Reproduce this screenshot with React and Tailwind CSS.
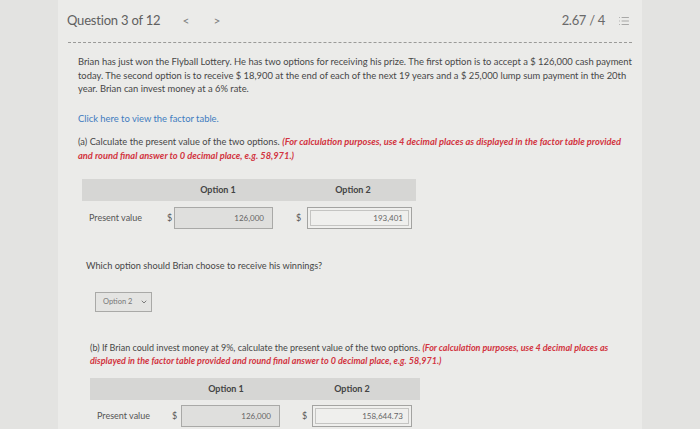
import { List, ChevronDown } from 'lucide-react'

function Row({ pad, labelW, gapA, in1W, gapB, gapC, in2W, v1, v2 }) {
  return (
    <div className="flex items-center h-[22px]" style={{ paddingLeft: pad }}>
      <span className="text-[9px] text-[#555]" style={{ width: labelW }}>Present value</span>
      <span className="text-[9px] text-[#555] w-[7px]">$</span>
      <div
        className="h-[22px] border border-[#a9a9a7] bg-[#dfdfdd] flex items-center justify-end pr-[8px] text-[8px] text-[#666]"
        style={{ width: in1W, marginLeft: gapA }}
      >
        {v1}
      </div>
      <span className="text-[9px] text-[#555] w-[7px]" style={{ marginLeft: gapB }}>$</span>
      <div
        className="h-[22px] border border-[#a3a3a1] bg-[#efefed] p-[2px]"
        style={{ width: in2W, marginLeft: gapC }}
      >
        <div className="h-full border border-[#c4c4c2] flex items-center justify-end pr-[5px] text-[8px] text-[#666]">
          {v2}
        </div>
      </div>
    </div>
  )
}

export default function App() {
  return (
    <div className="w-[700px] h-[429px] overflow-hidden bg-[#e3e3e1] font-['Lato','Liberation_Sans',sans-serif]">
      <div className="ml-[58px] w-[584px] h-full bg-[#ebebe9]">
        {/* header */}
        <div className="h-[42px] flex items-center pl-[9px] pr-[6px] w-[580px]">
          <span className="text-[13px] text-[#606060] tracking-[-0.2px]">Question 3 of 12</span>
          <span className="ml-[22px] text-[12px] text-[#808080]">&lt;</span>
          <span className="ml-[24px] text-[12px] text-[#808080]">&gt;</span>
          <span className="ml-auto text-[13px] text-[#6a6a6a] tracking-[-0.3px]">2.67 / 4</span>
          <List size={12} strokeWidth={1.2} className="ml-[13px] mr-[2px] text-[#7a7a7a]" />
        </div>
        <div className="ml-[10px] w-[564px] border-b border-dashed border-[#9a9a98]" />

        {/* problem text */}
        <p className="ml-[20px] mt-[12px] text-[9.4px] leading-[13.5px] text-[#474747]">
          Brian has just won the Flyball Lottery. He has two options for receiving his prize. The first option is to accept a $ 126,000 cash payment
          <br />
          today. The second option is to receive $ 18,900 at the end of each of the next 19 years and a $ 25,000 lump sum payment in the 20th
          <br />
          year. Brian can invest money at a 6% rate.
        </p>

        <p className="ml-[20px] mt-[16px] text-[9.4px] leading-[13.5px] text-[#3f7cc0]">Click here to view the factor table.</p>

        <p className="ml-[20px] mt-[10px] text-[9.3px] leading-[14px] text-[#474747]">
          (a) Calculate the present value of the two options.{' '}
          <span className="italic font-bold text-[#d2343f]">
            (For calculation purposes, use 4 decimal places as displayed in the factor table provided
            <br />
            and round final answer to 0 decimal place, e.g. 58,971.)
          </span>
        </p>

        {/* table a */}
        <div className="ml-[24px] mt-[16px] w-[334px]">
          <div className="h-[22px] bg-[#d6d6d4] flex items-center text-[9px] font-bold text-[#444]">
            <span className="ml-[88px] w-[96px] text-center">Option 1</span>
            <span className="ml-[34px] w-[106px] text-center">Option 2</span>
          </div>
          <div className="mt-[6px]">
            <Row pad={7} labelW={78} gapA={0} in1W={99} gapB={23} gapC={4} in2W={105} v1="126,000" v2="193,401" />
          </div>
        </div>

        <p className="ml-[28px] mt-[30px] text-[9.2px] leading-[13.5px] text-[#474747]">
          Which option should Brian choose to receive his winnings?
        </p>

        <div className="ml-[37px] mt-[19px] w-[57px] h-[20px] border border-[#a9a9a7] bg-[#e4e4e2] flex items-center pl-[7px] pr-[3px] text-[7.5px] text-[#777]">
          <span>Option 2</span>
          <ChevronDown size={8} strokeWidth={2.5} className="ml-auto text-[#666]" />
        </div>

        <p className="ml-[32px] mt-[29px] text-[9px] leading-[13.5px] text-[#474747]">
          (b) If Brian could invest money at 9%, calculate the present value of the two options.{' '}
          <span className="italic font-bold text-[#d2343f]">
            (For calculation purposes, use 4 decimal places as
            <br />
            displayed in the factor table provided and round final answer to 0 decimal place, e.g. 58,971.)
          </span>
        </p>

        {/* table b */}
        <div className="ml-[32px] mt-[10px] w-[330px]">
          <div className="h-[22px] bg-[#d6d6d4] flex items-center text-[9px] font-bold text-[#444]">
            <span className="ml-[88px] w-[96px] text-center">Option 1</span>
            <span className="ml-[25px] w-[106px] text-center">Option 2</span>
          </div>
          <div className="mt-[5px]">
            <Row pad={7} labelW={75} gapA={2} in1W={99} gapB={22} gapC={3} in2W={100} v1="126,000" v2="158,644.73" />
          </div>
        </div>
      </div>
    </div>
  )
}
